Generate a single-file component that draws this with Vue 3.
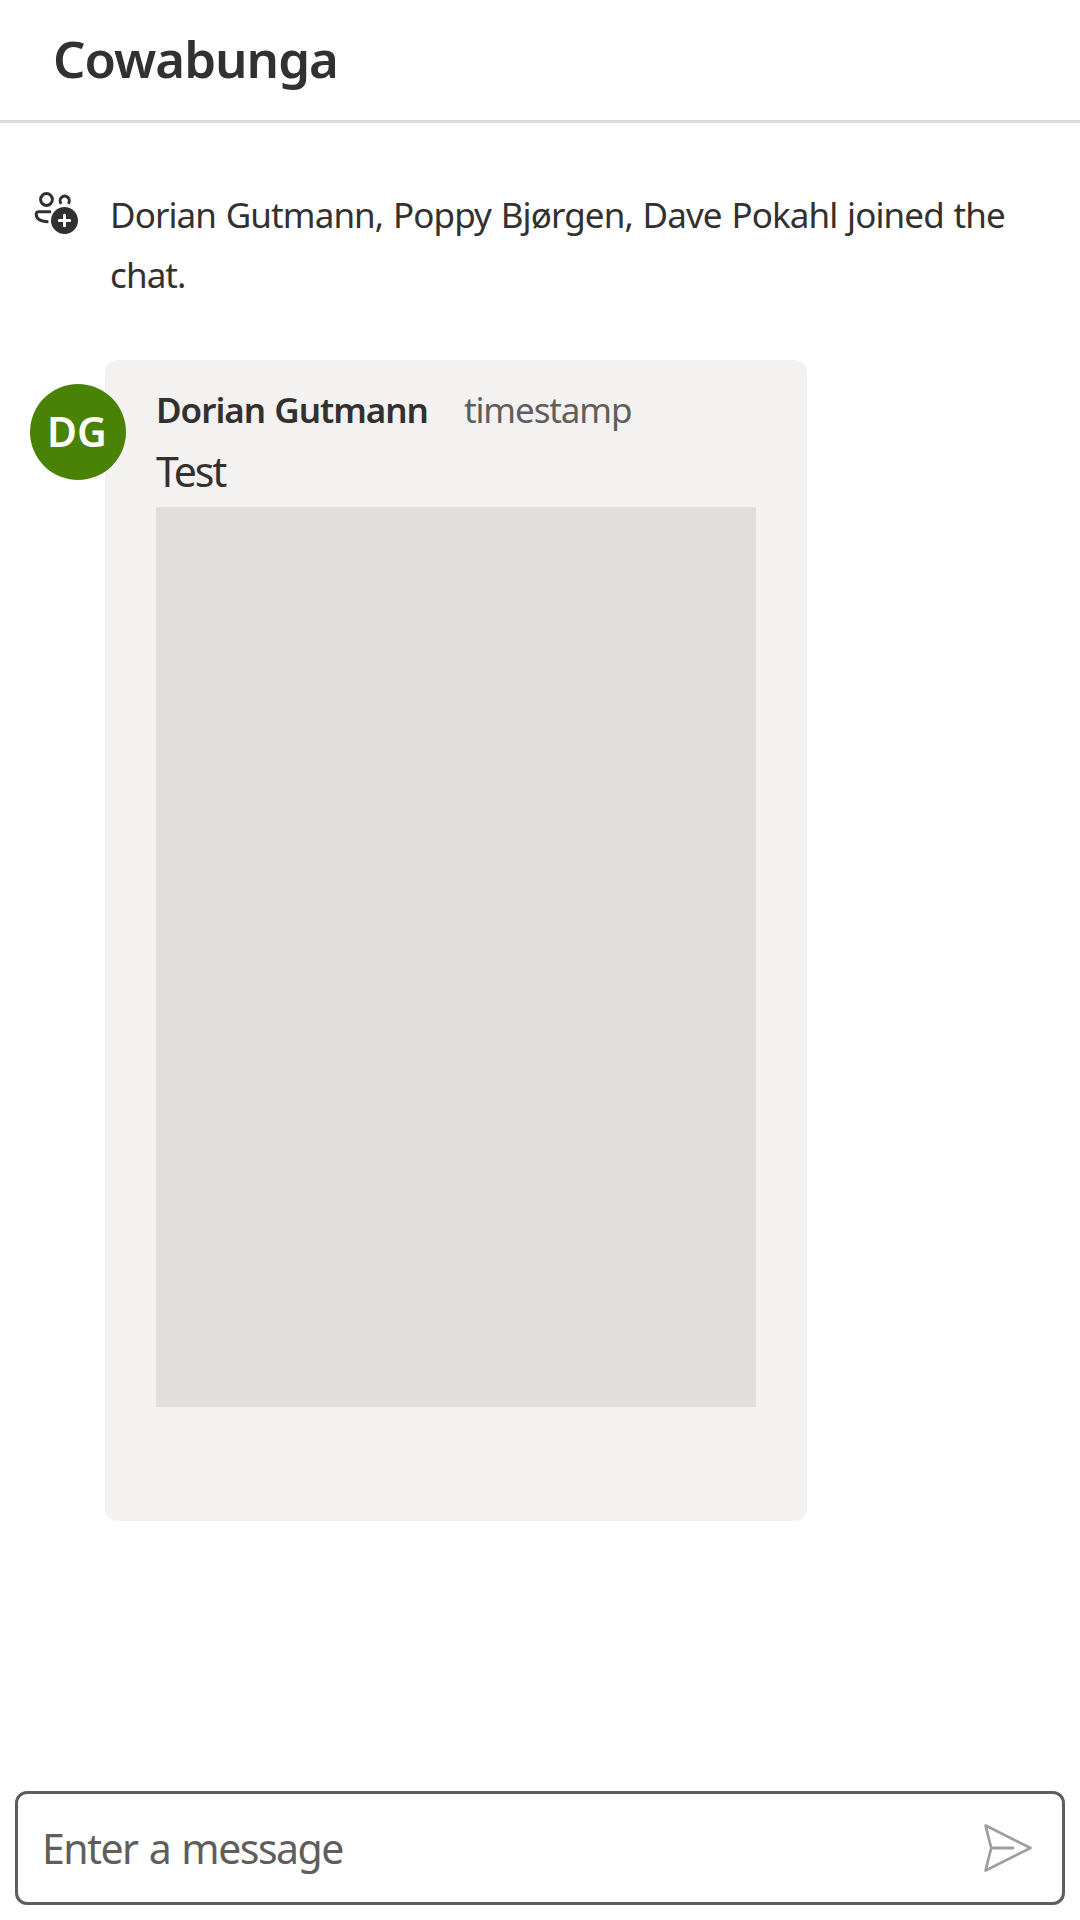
<script setup>
import { ref } from 'vue'

const draft = ref('')
</script>

<template>
  <div class="chat">
    <header class="header">
      <h1 class="title">Cowabunga</h1>
    </header>

    <main class="thread">
      <div class="system">
        <svg class="people" width="60" height="60" viewBox="0 0 60 60" fill="none">
          <g stroke="#323130" stroke-width="3">
            <circle cx="22.5" cy="14.5" r="5.9" />
            <path d="M37.3 18.8a4.6 4.6 0 1 1 6.8 0" />
            <path d="M27 26.7H15c-1.7 0-2.8 1-2.8 2.6 0 4.6 4.4 7.1 12.2 7.4" />
          </g>
          <circle cx="40.5" cy="35.5" r="13.5" fill="#323130" />
          <path d="M40.5 30.3v10.4M35.3 35.5h10.4" stroke="#fff" stroke-width="3" stroke-linecap="round" />
        </svg>
        <p class="system-text">Dorian Gutmann, Poppy Bjørgen, Dave Pokahl joined the chat.</p>
      </div>

      <article class="message">
        <div class="avatar"><span>DG</span></div>
        <div class="bubble">
          <div class="meta">
            <span class="author">Dorian Gutmann</span>
            <span class="time">timestamp</span>
          </div>
          <p class="body">Test</p>
          <div class="attachment"></div>
        </div>
      </article>
    </main>

    <footer class="composer">
      <input v-model="draft" class="field" type="text" placeholder="Enter a message" />
      <button class="send" aria-label="Send">
        <svg width="60" height="60" viewBox="0 0 60 60" fill="none" stroke="#a19f9d" stroke-width="2.8" stroke-linejoin="round" stroke-linecap="round">
          <path d="M7.6 7.6 52.4 30 7.6 52.4 13.2 30zM13.2 30H35" />
        </svg>
      </button>
    </footer>
  </div>
</template>

<style>
body {
  background: #fff;
}
</style>

<style scoped>
.chat {
  display: flex;
  flex-direction: column;
  height: 1920px;
  box-sizing: border-box;
  padding-bottom: 15px;
  color: #323130;
  font-family: "Segoe UI", "Noto Sans", "Open Sans", sans-serif;
}
.header {
  height: 120px;
  border-bottom: 3px solid #dcdcdc;
  padding-left: 53px;
}
.title {
  margin: 0;
  font-size: 51px;
  font-weight: 600;
  line-height: 117px;
  letter-spacing: -1px;
}
.thread {
  flex: 1;
  padding-top: 62px;
}
.system {
  display: flex;
  align-items: flex-start;
  height: 120px;
  margin-bottom: 55px;
}
.people {
  flex: none;
  margin-left: 24px;
}
.system-text {
  margin: 0 0 0 26px;
  width: 920px;
  font-size: 35px;
  line-height: 60px;
  letter-spacing: -0.9px;
  word-spacing: 1.5px;
}
.message {
  display: flex;
  align-items: flex-start;
  padding-left: 30px;
}
.avatar {
  position: relative;
  z-index: 1;
  flex: none;
  display: flex;
  align-items: center;
  justify-content: center;
  width: 96px;
  height: 96px;
  margin: 24px -21px 0 0;
  border-radius: 50%;
  background: #498205;
  color: #fff;
  font-size: 41px;
  font-weight: 600;
  line-height: 94px;
}
.avatar span {
  margin: 0 2px 2px 0;
}
.bubble {
  box-sizing: border-box;
  width: 702px;
  height: 1161px;
  padding: 20px 51px 0;
  border-radius: 12px;
  background: #f3f2f0;
}
.meta {
  display: flex;
  font-size: 35px;
  line-height: 60px;
}
.author {
  font-weight: 600;
  letter-spacing: -1px;
  word-spacing: 1px;
  margin-right: 36px;
}
.time {
  color: #605e5c;
  letter-spacing: -1.1px;
}
.body {
  margin: 1px 0 6px;
  font-size: 41px;
  line-height: 60px;
  letter-spacing: -2.1px;
}
.attachment {
  width: 600px;
  height: 900px;
  background: #e0dfdd;
}
.composer {
  display: flex;
  align-items: center;
  box-sizing: border-box;
  height: 114px;
  margin: 0 15px;
  padding: 0 24px 0 24px;
  border: 3px solid #605e5c;
  border-radius: 12px;
}
.field {
  flex: 1;
  height: 60px;
  padding: 0 0 1px;
  border: 0;
  outline: 0;
  background: none;
  color: #323130;
  font-family: inherit;
  font-size: 41px;
  letter-spacing: -1.5px;
  word-spacing: 2px;
}
.field::placeholder {
  color: #605e5c;
  opacity: 1;
}
.send {
  width: 60px;
  height: 60px;
  padding: 0;
  border: 0;
  background: none;
}
.send svg {
  display: block;
}
</style>
